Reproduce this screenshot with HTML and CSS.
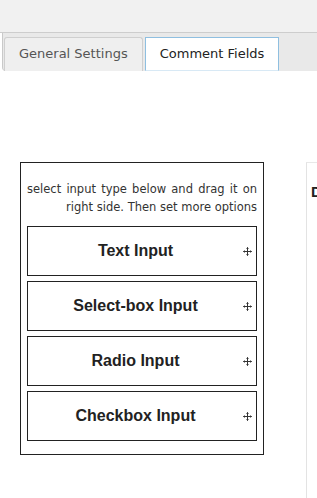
FILE: index.html
```html
<!DOCTYPE html>
<html lang="en">
<head>
    <meta charset="UTF-8">
    <meta name="viewport" content="width=device-width, initial-scale=1.0">
    <title>Comment Fields</title>
    <link rel="stylesheet" href="styles.css">
</head>
<body>
    <div class="topbar"></div>
    <ul class="tabs">
        <li class="tab">General Settings</li>
        <li class="tab active">Comment Fields</li>
    </ul>

    <div class="builder">
        <div class="toolbox">
            <p class="hint">select input type below and drag it on right side. Then set more options</p>
            <div class="field-type"><span class="label">Text Input</span><span class="move"><svg width="9" height="9" viewBox="0 0 9 9"><path d="M4.5 0.5v8M0.5 4.5h8M3.5 1.5l1-1 1 1M3.5 7.5l1 1 1-1M1.5 3.5l-1 1 1 1M7.5 3.5l1 1-1 1" fill="none" stroke="#333" stroke-width="1"/></svg></span></div>
            <div class="field-type"><span class="label">Select-box Input</span><span class="move"><svg width="9" height="9" viewBox="0 0 9 9"><path d="M4.5 0.5v8M0.5 4.5h8M3.5 1.5l1-1 1 1M3.5 7.5l1 1 1-1M1.5 3.5l-1 1 1 1M7.5 3.5l1 1-1 1" fill="none" stroke="#333" stroke-width="1"/></svg></span></div>
            <div class="field-type"><span class="label">Radio Input</span><span class="move"><svg width="9" height="9" viewBox="0 0 9 9"><path d="M4.5 0.5v8M0.5 4.5h8M3.5 1.5l1-1 1 1M3.5 7.5l1 1 1-1M1.5 3.5l-1 1 1 1M7.5 3.5l1 1-1 1" fill="none" stroke="#333" stroke-width="1"/></svg></span></div>
            <div class="field-type"><span class="label">Checkbox Input</span><span class="move"><svg width="9" height="9" viewBox="0 0 9 9"><path d="M4.5 0.5v8M0.5 4.5h8M3.5 1.5l1-1 1 1M3.5 7.5l1 1 1-1M1.5 3.5l-1 1 1 1M7.5 3.5l1 1-1 1" fill="none" stroke="#333" stroke-width="1"/></svg></span></div>
        </div>
        <div class="dropzone">
            <h3>Drag fields here</h3>
        </div>
    </div>
</body>
</html>
```
FILE: styles.css
```css
body {
    margin: 0;
    font-family: "DejaVu Sans", Verdana, sans-serif;
    background-color: #fff;
    overflow: hidden;
    height: 498px;
}
.topbar {
    height: 32px;
    background-color: #f1f1f1;
    border-bottom: 1px solid #cdcdcd;
}
.tabs {
    list-style: none;
    margin: 0 0 0 2px;
    padding: 4px 0 0 1px;
    display: flex;
    gap: 2px;
    background-color: #e9e9e9;
    border-left: 1px solid #c9c9c9;
    border-bottom-left-radius: 4px;
    box-sizing: border-box;
    height: 38px;
}
.tab {
    padding: 0 14px;
    line-height: 32px;
    font-size: 13px;
    color: #555;
    background-color: #efefef;
    border: 1px solid #cfcfcf;
    border-bottom: none;
    border-radius: 3px 3px 0 0;
}
.tab.active {
    background-color: #fff;
    color: #222;
    border-color: #8fbfe0;
    border-bottom: 1px solid #d8e9f5;
    border-radius: 0;
}
.builder {
    display: flex;
    align-items: flex-start;
    gap: 42px;
    margin-top: 91px;
}
.toolbox {
    flex-shrink: 0;
    margin-left: 20px;
    width: 244px;
    padding: 17px 6px 13px;
    border: 1px solid #222;
    box-sizing: border-box;
}
.hint {
    margin: 0 0 10px;
    font-size: 11.5px;
    line-height: 18px;
    color: #333;
    text-align: justify;
    text-align-last: right;
}
.field-type {
    display: flex;
    align-items: center;
    height: 50px;
    border: 1px solid #222;
    box-sizing: border-box;
    margin-bottom: 5px;
}
.field-type:last-child {
    margin-bottom: 0;
}
.label {
    flex: 1;
    text-align: center;
    font-family: "Liberation Sans", Arial, sans-serif;
    font-weight: bold;
    font-size: 16px;
    color: #222;
}
.move {
    width: 9px;
    height: 9px;
    margin: 0 4px 0 0;
    display: flex;
}
.dropzone {
    flex: 1;
    min-width: 0;
    height: 336px;
    overflow: hidden;
    border-top: 1px solid #e8e8e8;
    border-left: 1px solid #e3e3e3;
    padding: 20px 0 0 4px;
    box-sizing: border-box;
    white-space: nowrap;
}
.dropzone h3 {
    margin: 0;
    font-family: "Liberation Sans", Arial, sans-serif;
    font-size: 15px;
    color: #222;
}
```
